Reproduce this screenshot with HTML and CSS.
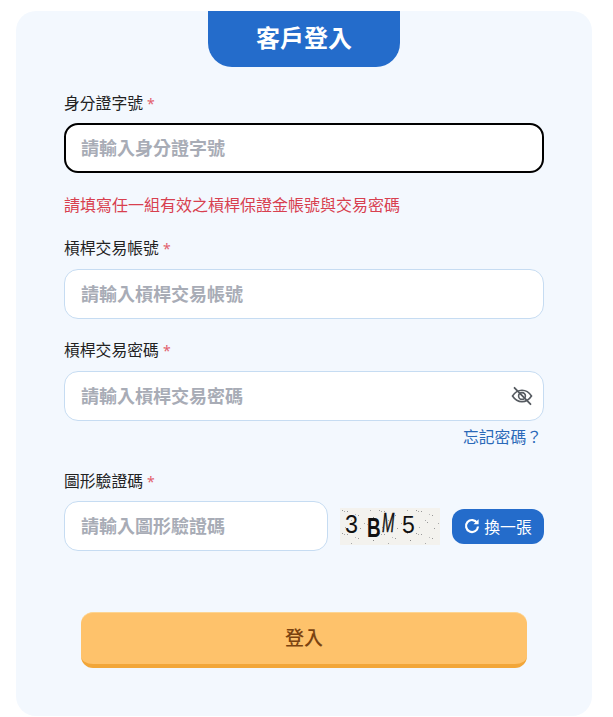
FILE: index.html
```html
<!DOCTYPE html>
<html lang="zh-Hant">
<head>
    <meta charset="utf-8">
    <title>客戶登入</title>
    <link rel="stylesheet" href="styles.css">
</head>
<body>
    <div class="card">
        <div class="tab-wrap">
            <h1 class="tab">客戶登入</h1>
        </div>
        <form class="login-form">
            <div class="field field-id">
                <label class="field-label" for="id-no">身分證字號 <span class="req">*</span></label>
                <input id="id-no" class="text-input is-focus" type="text" placeholder="請輸入身分證字號">
            </div>
            <p class="error-text">請填寫任一組有效之槓桿保證金帳號與交易密碼</p>
            <div class="field field-account">
                <label class="field-label" for="account">槓桿交易帳號 <span class="req">*</span></label>
                <input id="account" class="text-input" type="text" placeholder="請輸入槓桿交易帳號">
            </div>
            <div class="field field-password">
                <label class="field-label" for="password">槓桿交易密碼 <span class="req">*</span></label>
                <div class="input-wrap">
                    <input id="password" class="text-input" type="password" placeholder="請輸入槓桿交易密碼">
                    <!-- eye toggle -->
                    <svg class="eye-icon" width="22" height="20" viewBox="0 0 22 20" fill="none" stroke="#555a60" stroke-width="1.6" stroke-linecap="round">
                        <path d="M1.5 10C4 6.2 7.2 4.3 11 4.3S18 6.2 20.5 10C18 13.8 14.8 15.7 11 15.7S4 13.8 1.5 10Z"/>
                        <circle cx="11" cy="10" r="3.4"/>
                        <path d="M3.5 1.8L19.5 18.2" stroke-width="1.8"/>
                    </svg>
                </div>
                <div class="forgot-row"><a class="forgot-link" href="#">忘記密碼？</a></div>
            </div>
            <div class="field field-captcha">
                <label class="field-label" for="captcha">圖形驗證碼 <span class="req">*</span></label>
                <div class="captcha-row">
                    <input id="captcha" class="text-input captcha-input" type="text" placeholder="請輸入圖形驗證碼">
                    <svg class="captcha-img" width="100" height="37" viewBox="0 0 100 37">
                        <defs>
                            <pattern id="noise" width="37" height="23" patternUnits="userSpaceOnUse">
                                <rect x="2" y="2" width="1" height="1" fill="#999"/>
                                <rect x="4" y="3" width="1" height="1" fill="#aaa"/>
                                <rect x="7" y="3" width="1" height="1" fill="#999"/>
                                <rect x="15" y="6" width="1" height="1" fill="#bbb"/>
                                <rect x="18" y="7" width="1" height="1" fill="#999"/>
                                <rect x="30" y="2" width="1" height="1" fill="#aaa"/>
                                <rect x="33" y="9" width="1" height="1" fill="#888"/>
                                <rect x="11" y="12" width="1" height="1" fill="#aaa"/>
                                <rect x="13" y="14" width="1" height="1" fill="#999"/>
                                <rect x="24" y="15" width="1" height="1" fill="#aaa"/>
                                <rect x="27" y="16" width="1" height="1" fill="#bbb"/>
                                <rect x="5" y="19" width="1" height="1" fill="#aaa"/>
                                <rect x="20" y="20" width="1" height="1" fill="#999"/>
                                <rect x="35" y="19" width="1" height="1" fill="#aaa"/>
                            </pattern>
                        </defs>
                        <rect width="100" height="37" fill="#f3f2ee"/>
                        <rect width="100" height="37" fill="url(#noise)"/>
                        <text class="cap-char" font-size="26" transform="translate(5 25) scale(.9 1)">3</text>
                        <text class="cap-char cap-bold" font-size="27" transform="translate(27 29) scale(.7 1)">B</text>
                        <text class="cap-char cap-italic" font-size="27" transform="translate(42 24) scale(.55 1)">M</text>
                        <text class="cap-char" font-size="23" transform="translate(62 25)">5</text>
                    </svg>
                    <button class="refresh-btn" type="button">
                        <svg width="16" height="16" viewBox="0 0 16 16" fill="none" stroke="#fff" stroke-width="2.2">
                            <path d="M13.2 5A6 6 0 1 0 14 8.5"/>
                            <path d="M14.6 1.2V6.3H9.5Z" fill="#fff" stroke="none"/>
                        </svg>
                        換一張
                    </button>
                </div>
            </div>
            <div class="submit-row">
                <button class="submit-btn" type="button">登入</button>
            </div>
        </form>
    </div>
</body>
</html>
```

FILE: styles.css
```css
* {
    box-sizing: border-box;
}

body {
    margin: 0;
    background-color: #fff;
    font-family: "Noto Sans", "Noto Sans CJK TC", sans-serif;
    color: #222;
}

.card {
    width: 576px;
    height: 705px;
    margin: 11px 0 0 16px;
    background-color: #f3f8fe;
    border-radius: 20px;
}

.tab-wrap {
    display: flex;
    justify-content: center;
}

.tab {
    width: 192px;
    height: 56px;
    margin: 0;
    background-color: #246ccb;
    border-radius: 0 0 24px 24px;
    color: #fff;
    font-size: 24px;
    font-weight: 700;
    line-height: 54px;
    text-align: center;
}

.login-form {
    padding: 24px 48px 0;
}

.field-label {
    display: block;
    height: 33px;
    font-size: 15.8px;
    font-weight: 400;
    line-height: 24px;
}

.field-id .field-label,
.field-captcha .field-label {
    height: 32px;
}

.req {
    color: #e2606c;
    font-size: 14px;
}

.text-input {
    display: block;
    width: 100%;
    height: 50px;
    padding: 0 16px;
    background-color: #fff;
    border: 1px solid #c6dcf2;
    border-radius: 14px;
    font-family: inherit;
    font-size: 18px;
    outline: none;
}

.text-input::placeholder {
    color: #a8acb6;
    font-weight: 600;
}

.is-focus {
    padding: 0 15px;
    border: 2px solid #000;
}

.error-text {
    margin: 18px 0 0;
    height: 28px;
    color: #d8404f;
    font-size: 16px;
    font-weight: 400;
    line-height: 28px;
}

.field-account {
    margin-top: 17px;
}

.field-password {
    margin-top: 19px;
}

.input-wrap {
    position: relative;
}

.eye-icon {
    position: absolute;
    right: 11px;
    top: 15px;
}

.forgot-row {
    display: flex;
    justify-content: flex-end;
    height: 33px;
    padding: 3px 2px 0 0;
}

.forgot-link {
    color: #2a69b8;
    font-size: 15.8px;
    line-height: 26px;
    text-decoration: none;
}

.field-captcha {
    margin-top: 15px;
}

.captcha-row {
    display: flex;
    align-items: center;
}

.captcha-input {
    width: 264px;
}

.captcha-img {
    display: block;
    margin-left: 12px;
    overflow: visible;
}

.cap-char {
    font-family: "Liberation Sans", sans-serif;
    fill: #111;
}

.cap-bold {
    font-weight: 700;
}

.cap-italic {
    font-style: italic;
    stroke: #111;
    stroke-width: 0.4;
}

.refresh-btn {
    display: flex;
    align-items: center;
    justify-content: center;
    gap: 4px;
    width: 92px;
    height: 35px;
    margin-left: 12px;
    padding: 0;
    background-color: #246ccb;
    border: 0;
    border-radius: 12px;
    color: #fff;
    font-family: inherit;
    font-size: 15.8px;
}

.submit-row {
    margin-top: 61px;
    padding: 0 17px;
}

.submit-btn {
    display: block;
    width: 100%;
    height: 56px;
    padding: 0 0 3px;
    background-color: #fec26b;
    border: 0;
    border-top: 1px solid #fdd592;
    border-bottom: 4px solid #f2a638;
    border-radius: 12px;
    color: #7a4210;
    font-family: inherit;
    font-size: 19px;
    font-weight: 500;
}
```
